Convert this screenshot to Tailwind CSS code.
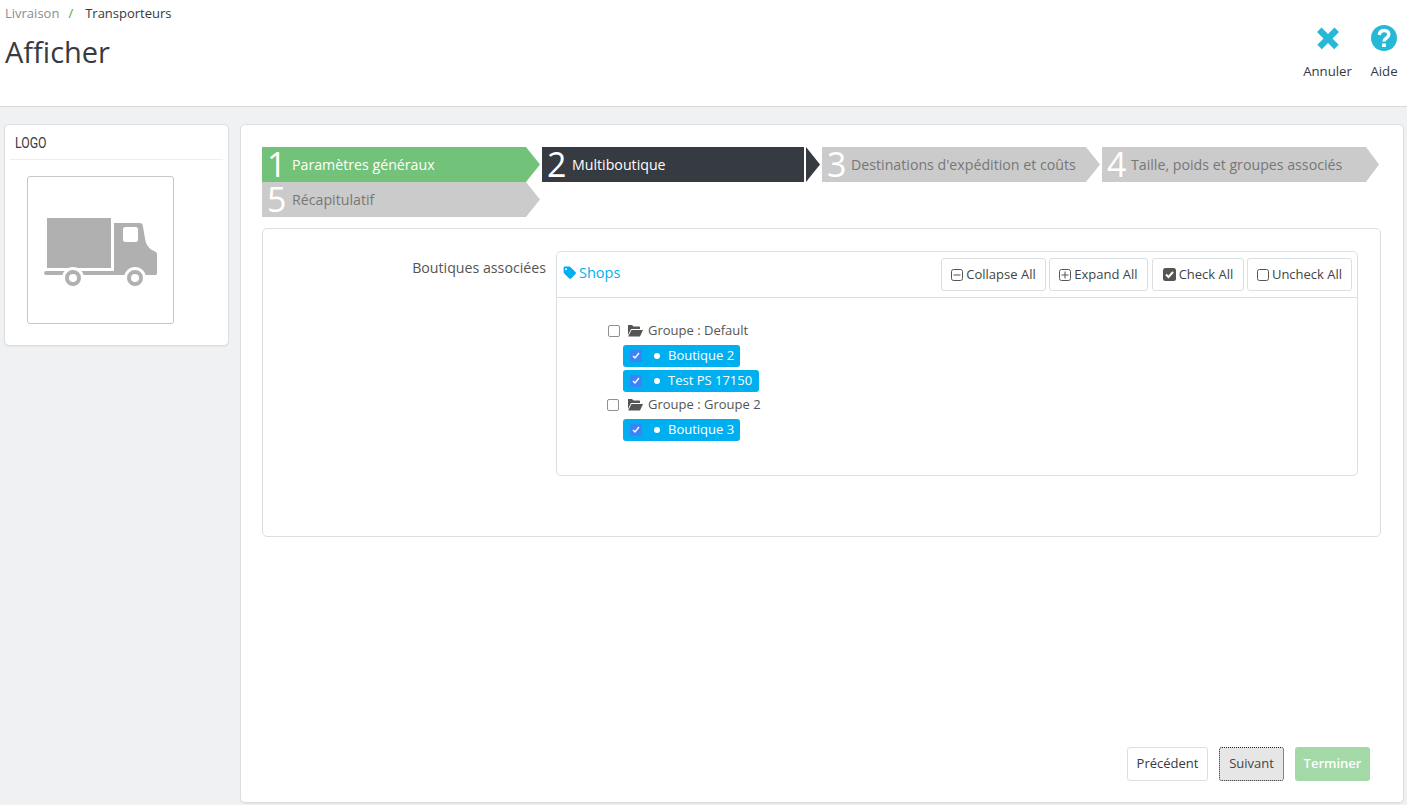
<!DOCTYPE html>
<html lang="fr">
<head>
  <meta charset="UTF-8" />
  <title>Transporteurs</title>
  <script src="https://cdn.jsdelivr.net/npm/@tailwindcss/browser@4"></script>
</head>
<body class="h-[805px] overflow-hidden bg-[#eff1f2] font-['Open_Sans',sans-serif] text-[13px] text-[#555]">

  <!-- Header -->
  <header class="h-[107px] bg-white border-b border-[#d9dadb] flex justify-between pl-[5px]">
    <div>
      <div class="pt-[5px] flex text-[13px] leading-[17px]">
        <span class="text-[#8a8d90]">Livraison</span>
        <span class="text-[#5c9c2e] ml-[9px] mr-[12px]">/</span>
        <span class="text-[#363a41]">Transporteurs</span>
      </div>
      <h1 class="text-[29px] leading-[40px] mt-[10px] text-[#363a41]">Afficher</h1>
    </div>
    <div class="flex pt-[24px] text-[13.200px] text-[#363a41]">
      <div class="w-[49px] flex flex-col items-center mr-[17px]">
        <svg class="w-[28px] h-[28px]" viewBox="0 0 28 28"><path fill="#25b9d7" d="M7.500 3.500 14 10l6.500-6.500 4.500 4.500-6.500 6.500 6.200 6.200-4.500 4.500-6.200-6.200-6.200 6.200-4.500-4.500 6.200-6.200L3 8z" /></svg>
        <span class="mt-[11px] leading-[17px]">Annuler</span>
      </div>
      <div class="w-[30px] flex flex-col items-center mr-[8px]">
        <svg class="w-[28px] h-[28px]" viewBox="0 0 28 28"><circle cx="14" cy="14" r="13" fill="#25b9d7" /><path fill="none" stroke="#fff" stroke-width="3.400" d="M9.300 11c.3-3 2.300-4.500 4.800-4.500 2.800 0 4.700 1.700 4.700 4 0 3.600-4.800 3.500-4.800 7" /><rect x="12.100" y="19.500" width="3.800" height="3.500" fill="#fff" /></svg>
        <span class="mt-[11px] leading-[17px]">Aide</span>
      </div>
    </div>
  </header>

  <main class="flex items-start pl-[4px] pr-[3px] pt-[17px] gap-[11px]">
    <!-- Logo card -->
    <aside class="w-[225px] h-[222px] shrink-0 bg-white border border-[#dcdfe1] rounded-[5px] px-[5px] shadow-[0_1px_1px_#e3e5e6]">
      <div class="h-[35px] border-b border-[#eeeeee] pl-[5px] pt-[8px] leading-[20px] text-[14px] text-[#363a41] font-['Roboto',sans-serif]"><span class="inline-block origin-left scale-x-[0.88]">LOGO</span></div>
      <div class="ml-[17px] mt-[16px] w-[147px] h-[148px] border border-[#c7c7c7] rounded-[3px] flex items-center justify-center">
        <svg class="w-[115px] h-[70px] mt-[4px]" viewBox="0 0 115 70">
          <path fill="#b0b0b0" d="M4 1h64v50H4z" />
          <path fill="#b0b0b0" d="M71 6h26c1.500 0 2.300.8 2.700 2.300l2.800 15.700c.6 3.500 4 8.500 9.500 10.500 1.500.6 2 1.600 2 3V56c0 1.400-.6 2-2 2H71z" />
          <rect x="1" y="54" width="72" height="4" rx="2" fill="#b0b0b0" />
          <rect x="80" y="10" width="15" height="15" rx="2.500" fill="#fff" />
          <circle cx="30" cy="61" r="11" fill="#fff" />
          <circle cx="92" cy="61" r="11" fill="#fff" />
          <circle cx="30" cy="61" r="6" fill="#fff" stroke="#b0b0b0" stroke-width="4" />
          <circle cx="92" cy="61" r="6" fill="#fff" stroke="#b0b0b0" stroke-width="4" />
        </svg>
      </div>
    </aside>

    <!-- Wizard card -->
    <section class="w-[1164px] h-[679px] shrink-0 bg-white border border-[#dcdfe1] rounded-[5px] pl-[21px] pr-[22px] pt-[22px] shadow-[0_1px_1px_#e3e5e6] relative">
      <!-- Steps -->
      <div class="flex flex-wrap w-[1120px]">
        <div class="w-[280px] h-[35px] flex">
          <div class="w-[264px] bg-[#72c279] text-white flex items-center pl-[5px]">
            <span class="text-[34px] leading-[33px] w-[25px]">1</span><span class="text-[14.200px]">Paramètres généraux</span>
          </div>
          <div class="w-[14px] bg-[#72c279] [clip-path:polygon(0_0,100%_50%,0_100%)]"></div>
        </div>
        <div class="w-[280px] h-[35px] flex">
          <div class="w-[262px] bg-[#363a41] text-white flex items-center pl-[5px]">
            <span class="text-[34px] leading-[33px] w-[25px]">2</span><span class="text-[14.200px]">Multiboutique</span>
          </div>
          <div class="ml-[2px] w-[14px] bg-[#363a41] [clip-path:polygon(0_0,100%_50%,0_100%)]"></div>
        </div>
        <div class="w-[280px] h-[35px] flex">
          <div class="w-[264px] bg-[#cbcbcb] flex items-center pl-[5px]">
            <span class="text-[34px] leading-[33px] w-[24px] text-white">3</span><span class="text-[14.200px] text-[#777]">Destinations d'expédition et coûts</span>
          </div>
          <div class="w-[14px] bg-[#cbcbcb] [clip-path:polygon(0_0,100%_50%,0_100%)]"></div>
        </div>
        <div class="w-[280px] h-[35px] flex">
          <div class="w-[264px] bg-[#cbcbcb] flex items-center pl-[5px]">
            <span class="text-[34px] leading-[33px] w-[24px] text-white">4</span><span class="text-[14.200px] text-[#777]">Taille, poids et groupes associés</span>
          </div>
          <div class="w-[13px] bg-[#cbcbcb] [clip-path:polygon(0_0,100%_50%,0_100%)]"></div>
        </div>
        <div class="w-[280px] h-[35px] flex">
          <div class="w-[264px] bg-[#cbcbcb] flex items-center pl-[5px]">
            <span class="text-[34px] leading-[33px] w-[25px] text-white">5</span><span class="text-[14.200px] text-[#777]">Récapitulatif</span>
          </div>
          <div class="w-[14px] bg-[#cbcbcb] [clip-path:polygon(0_0,100%_50%,0_100%)]"></div>
        </div>
      </div>

      <!-- Form panel -->
      <div class="mt-[11px] h-[309px] w-[1119px] border border-[#dcdfe1] rounded-[5px] flex items-start pt-[22px]">
        <label class="w-[283px] text-right leading-[34px] text-[14.200px]">Boutiques associées</label>
        <div class="ml-[10px] w-[802px] h-[225px] border border-[#dcdfe1] rounded-[5px]">
          <div class="h-[46px] border-b border-[#dcdfe1] flex items-start justify-between pl-[6px] pr-[5px] pt-[6px]">
            <div class="flex items-center text-[#00aff0] text-[14.500px] font-medium leading-[19px] pt-[5px]">
              <svg class="w-[13px] h-[13px] mr-[3px]" viewBox="0 0 13 13"><path fill="#00aff0" d="M.6 1.800C.6 1 1.200.5 2 .5h4c.7 0 1.200.3 1.600.7l4.900 4.900c.6.6.6 1.400 0 2l-4.300 4.300c-.6.6-1.400.6-2 0L1.200 7.500C.8 7.100.6 6.600.6 6zM3 2.200a1 1 0 1 0 0 2 1 1 0 0 0 0-2z" /></svg>
              Shops
            </div>
            <div class="flex gap-[3px] text-[13px] text-[#444]">
              <button class="h-[33px] w-[105px] border border-[#dcdfe1] rounded-[3px] flex items-center justify-center gap-[3px]">
                <svg class="w-[12px] h-[12px]" viewBox="0 0 12 12"><rect x=".5" y=".5" width="11" height="11" rx="2" fill="none" stroke="#555" /><path stroke="#555" d="M2.500 6h7" /></svg>Collapse All
              </button>
              <button class="h-[33px] w-[99px] border border-[#dcdfe1] rounded-[3px] flex items-center justify-center gap-[3px]">
                <svg class="w-[12px] h-[12px]" viewBox="0 0 12 12"><rect x=".5" y=".5" width="11" height="11" rx="2" fill="none" stroke="#555" /><path stroke="#555" d="M2.500 6h7M6 2.500v7" /></svg>Expand All
              </button>
              <button class="ml-[1px] h-[33px] w-[92px] border border-[#dcdfe1] rounded-[3px] flex items-center justify-center gap-[3px]">
                <svg class="w-[13px] h-[13px]" viewBox="0 0 13 13"><rect width="13" height="13" rx="2.500" fill="#555" /><path fill="none" stroke="#fff" stroke-width="2" d="m3 6.500 2.500 2.500 4.500-5" /></svg>Check All
              </button>
              <button class="h-[33px] w-[105px] border border-[#dcdfe1] rounded-[3px] flex items-center justify-center gap-[3px]">
                <svg class="w-[12px] h-[12px]" viewBox="0 0 12 12"><rect x=".5" y=".5" width="11" height="11" rx="2" fill="none" stroke="#555" /></svg>Uncheck All
              </button>
            </div>
          </div>

          <!-- Tree -->
          <ul class="pl-[50px] pt-[21px] text-[13px]">
            <li class="h-[24px] flex items-center">
              <span class="w-[12px] h-[12px] border border-[#8f8f8f] rounded-[2px] bg-white ml-[1px]"></span>
              <svg class="w-[16px] h-[13px] ml-[7px] -mt-[2px]" viewBox="0 0 16 13"><path fill="#555" d="M1 1h4l1.500 1.500H12c.6 0 1 .4 1 1V5H4L1 11z" /><path fill="#555" d="M4.500 6H16l-3 6.500H1.200z" /></svg>
              <span class="ml-[5px]">Groupe : Default</span>
            </li>
            <li class="h-[25px] flex items-center pl-[16px]">
              <span class="h-[22px] bg-[#00aff0] rounded-[3px] text-white flex items-center pl-[7px] pr-[6px] font-medium">
                <span class="w-[12px] h-[12px] bg-[#3b82f6] rounded-[2px] flex items-center justify-center"><svg class="w-[8px] h-[8px]" viewBox="0 0 8 8"><path fill="none" stroke="#fff" stroke-width="1.400" d="m1 4 2 2 4-5" /></svg></span>
                <span class="w-[6px] h-[6px] rounded-full bg-white ml-[12px] mr-[8px]"></span>Boutique 2
              </span>
            </li>
            <li class="h-[25px] flex items-center pl-[16px]">
              <span class="h-[22px] bg-[#00aff0] rounded-[3px] text-white flex items-center pl-[7px] pr-[7px] font-medium">
                <span class="w-[12px] h-[12px] bg-[#3b82f6] rounded-[2px] flex items-center justify-center"><svg class="w-[8px] h-[8px]" viewBox="0 0 8 8"><path fill="none" stroke="#fff" stroke-width="1.400" d="m1 4 2 2 4-5" /></svg></span>
                <span class="w-[6px] h-[6px] rounded-full bg-white ml-[12px] mr-[8px]"></span>Test PS 17150
              </span>
            </li>
            <li class="h-[24px] flex items-center">
              <span class="w-[12px] h-[12px] border border-[#8f8f8f] rounded-[2px] bg-white"></span>
              <svg class="w-[16px] h-[13px] ml-[8px] -mt-[2px]" viewBox="0 0 16 13"><path fill="#555" d="M1 1h4l1.500 1.500H12c.6 0 1 .4 1 1V5H4L1 11z" /><path fill="#555" d="M4.500 6H16l-3 6.500H1.200z" /></svg>
              <span class="ml-[5px]">Groupe : Groupe 2</span>
            </li>
            <li class="h-[25px] flex items-center pl-[16px]">
              <span class="h-[22px] bg-[#00aff0] rounded-[3px] text-white flex items-center pl-[7px] pr-[6px] font-medium">
                <span class="w-[12px] h-[12px] bg-[#3b82f6] rounded-[2px] flex items-center justify-center"><svg class="w-[8px] h-[8px]" viewBox="0 0 8 8"><path fill="none" stroke="#fff" stroke-width="1.400" d="m1 4 2 2 4-5" /></svg></span>
                <span class="w-[6px] h-[6px] rounded-full bg-white ml-[12px] mr-[8px]"></span>Boutique 3
              </span>
            </li>
          </ul>
        </div>
      </div>

      <!-- Footer buttons -->
      <div class="absolute right-[33px] bottom-[21px] flex gap-[11px] text-[13px]">
        <button class="w-[81px] h-[34px] bg-white border border-[#dcdfe1] rounded-[3px] text-[#363a41]">Précédent</button>
        <button class="w-[65px] h-[34px] bg-[#e6e6e6] border border-dotted border-[#222] rounded-[3px] text-[#444]">Suivant</button>
        <button class="w-[75px] h-[34px] bg-[#a3d8a7] rounded-[3px] text-white font-semibold">Terminer</button>
      </div>
    </section>
  </main>
</body>
</html>
